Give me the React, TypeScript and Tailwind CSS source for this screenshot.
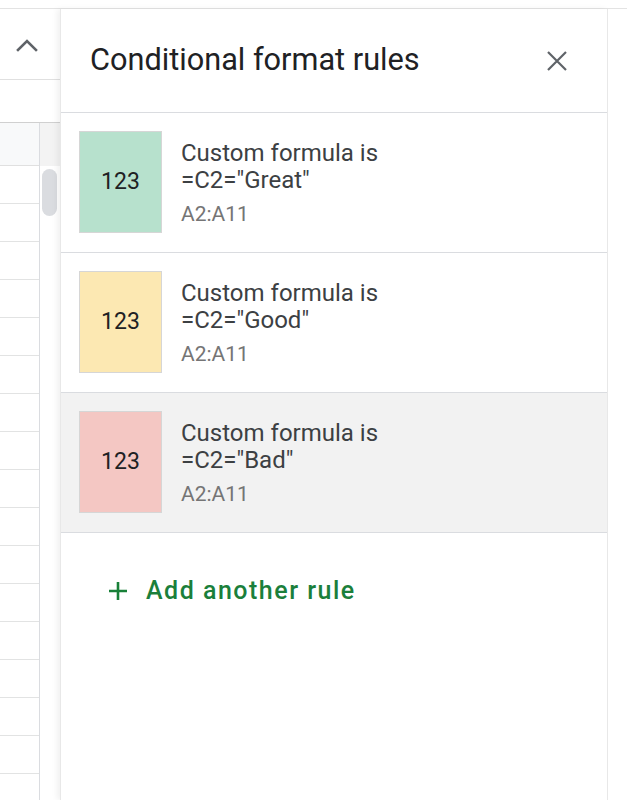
import React from "react";

type Rule = { color: string; formula: string; range: string; active?: boolean };

const rules: Rule[] = [
  { color: "bg-[#b7e1cd]", formula: '=C2="Great"', range: "A2:A11" },
  { color: "bg-[#fce8b2]", formula: '=C2="Good"', range: "A2:A11" },
  { color: "bg-[#f4c7c3]", formula: '=C2="Bad"', range: "A2:A11", active: true },
];

const font = { fontFamily: "Roboto, 'Noto Sans', Arial, sans-serif" };

function ChevronUp() {
  return (
    <svg width="22" height="14" viewBox="0 0 22 14" fill="none">
      <path d="M2 12 L11 3 L20 12" stroke="#5f6368" strokeWidth="2.6" strokeLinecap="square" />
    </svg>
  );
}

function CloseIcon() {
  return (
    <svg width="22" height="22" viewBox="0 0 22 22" fill="none">
      <path d="M2 2 L20 20 M20 2 L2 20" stroke="#5f6368" strokeWidth="2.2" />
    </svg>
  );
}

function PlusIcon() {
  return (
    <svg width="20" height="20" viewBox="0 0 20 20" fill="none">
      <path d="M10 1 V19 M1 10 H19" stroke="#188038" strokeWidth="2.6" />
    </svg>
  );
}

function SheetEdge() {
  const rows = Array.from({ length: 17 });
  return (
    <div className="w-[60px] flex flex-col shrink-0 bg-white overflow-hidden">
      <div className="h-[71px] shrink-0 border-b border-[#e0e0e0] flex items-start pt-[29px] pl-[16px]">
        <ChevronUp />
      </div>
      <div className="h-[42px] shrink-0" />
      <div className="flex shrink-0 border-t border-[#d0d0d0]">
        <div className="w-[40px] border-r border-[#dadce0] flex flex-col">
          <div className="h-[43px] shrink-0 bg-[#f8f9fa] border-b border-[#e0e0e0]" />
          {rows.map((_, i) => (
            <div key={i} className="h-[38px] shrink-0 border-b border-[#e2e3e3]" />
          ))}
        </div>
        <div className="flex-1 flex flex-col">
          <div className="h-[43px] shrink-0 bg-[#f3f3f3]" />
          <div className="mt-[3px] ml-[2px] w-[15px] h-[47px] shrink-0 rounded-full bg-[#dadce0]" />
        </div>
      </div>
    </div>
  );
}

function RuleCard({ rule }: { rule: Rule }) {
  return (
    <div
      className={`h-[140px] shrink-0 border-b border-[#dadce0] flex items-start pt-[18px] pl-[18px] ${
        rule.active ? "bg-[#f2f2f2]" : "bg-white"
      }`}
    >
      <div
        className={`w-[83px] h-[102px] ${rule.color} border border-[#d6d6d6] flex items-center justify-center text-[23px] text-[#202124]`}
      >
        123
      </div>
      <div className="ml-[19px] pt-[9px] flex flex-col">
        <div className="text-[24px] leading-[27px] text-[#3c4043]">Custom formula is</div>
        <div className="text-[24px] leading-[27px] text-[#3c4043]">{rule.formula}</div>
        <div className="text-[21px] leading-[27px] mt-[7px] text-[#757575]">{rule.range}</div>
      </div>
    </div>
  );
}

export default function App() {
  return (
    <div className="w-[627px] h-[800px] flex flex-col bg-white overflow-hidden" style={font}>
      <div className="h-[9px] shrink-0 border-b border-[#e3e3e3] bg-white" />
      <div className="flex flex-1 min-h-0">
        <SheetEdge />
        <div className="w-[548px] shrink-0 flex flex-col bg-white border-l border-[#e8e8e8] border-r border-[#dadce0] shadow-[-3px_0_6px_rgba(0,0,0,0.06)]">
          <div className="h-[104px] shrink-0 border-b border-[#dadce0] flex items-center justify-between pl-[29px] pr-[39px]">
            <div className="text-[30.7px] text-[#202124]">Conditional format rules</div>
            <CloseIcon />
          </div>
          {rules.map((r, i) => (
            <RuleCard key={i} rule={r} />
          ))}
          <div className="flex items-center pl-[47px] pt-[39px]">
            <PlusIcon />
            <span className="ml-[18px] text-[25px] font-medium text-[#1b7f3b] tracking-[1.5px]">
              Add another rule
            </span>
          </div>
        </div>
        <div className="flex-1 bg-white" />
      </div>
    </div>
  );
}
